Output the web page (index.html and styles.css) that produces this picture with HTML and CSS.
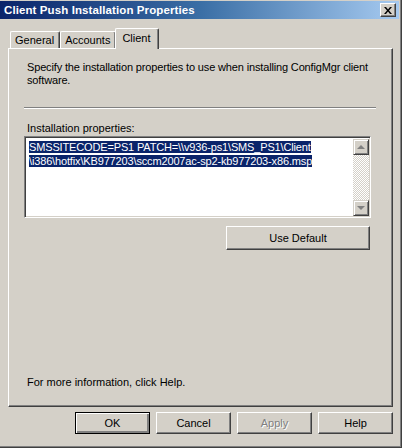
FILE: index.html
```html
<!DOCTYPE html>
<html>
	<head>
		<meta charset="utf-8">
		<title>Client Push Installation Properties</title>
		<link rel="stylesheet" href="styles.css">
	</head>
	<body>
		<div class="window">
			<div class="titlebar">
				<span class="title">Client Push Installation Properties</span>
				<span class="close-btn">
					<svg width="8" height="7" viewBox="0 0 8 7">
						<path d="M0 0h2l2 2.5 2-2.5h2L5 3.5 8 7H6L4 4.5 2 7H0l3-3.5z" fill="#000"/>
					</svg>
				</span>
			</div>
			<div class="tabs">
				<div class="tab">General</div>
				<div class="tab">Accounts</div>
				<div class="tab active">Client</div>
			</div>
			<div class="panel">
				<p class="intro">Specify the installation properties to use when installing ConfigMgr client software.</p>
				<div class="separator"></div>
				<label class="field-label">Installation properties:</label>
				<div class="textbox">
					<div class="textbox-content">
						<span class="selected">SMSSITECODE=PS1 PATCH=\\v936-ps1\SMS_PS1\Client</span><br>
						<span class="selected">\i386\hotfix\KB977203\sccm2007ac-sp2-kb977203-x86.msp</span>
					</div>
					<div class="scrollbar">
						<div class="scroll-btn"><span class="arrow up"></span></div>
						<div class="scroll-track"></div>
						<div class="scroll-btn"><span class="arrow down"></span></div>
					</div>
				</div>
				<div class="default-row">
					<button class="btn wide">Use Default</button>
				</div>
				<p class="help-note">For more information, click Help.</p>
			</div>
			<div class="buttons">
				<button class="btn default">OK</button>
				<button class="btn">Cancel</button>
				<button class="btn disabled">Apply</button>
				<button class="btn">Help</button>
			</div>
		</div>
	</body>
</html>
```

FILE: styles.css
```css
* {
	margin: 0;
	padding: 0;
	box-sizing: border-box;
}
body {
	font-family: "Liberation Sans", Arial, sans-serif;
	font-size: 11px;
	background: #d4d0c8;
	color: #000;
}
.window {
	width: 402px;
	height: 448px;
	display: flex;
	flex-direction: column;
	background: #d4d0c8;
	border-right: 1px solid #404040;
	border-bottom: 1px solid #404040;
	padding-bottom: 1px;
	box-shadow: inset -1px -1px 0 #808080;
}
.titlebar {
	height: 18px;
	margin-top: 1px;
	margin-right: 2px;
	display: flex;
	align-items: center;
	justify-content: space-between;
	padding: 0 3px 0 4px;
	background: linear-gradient(to right, #0a246a, #3a6ea5 50%, #a6caf0);
	color: #fff;
}
.title {
	font-weight: bold;
	font-size: 11.5px;
	letter-spacing: 0.1px;
}
.close-btn {
	width: 16px;
	height: 14px;
	display: flex;
	align-items: center;
	justify-content: center;
	background: #d4d0c8;
	border: 1px solid;
	border-color: #fff #404040 #404040 #fff;
	box-shadow: inset -1px -1px 0 #808080;
}
.tabs {
	display: flex;
	align-items: flex-end;
	height: 29px;
	padding-left: 10px;
	position: relative;
	z-index: 1;
}
.tab {
	height: 17px;
	padding: 0 5px 0 4px;
	display: flex;
	align-items: center;
	border: 1px solid;
	border-bottom: none;
	border-color: #fff #404040 #fff #fff;
	border-radius: 2px 2px 0 0;
	box-shadow: inset -1px 0 0 #808080;
}
.tab.active {
	height: 21px;
	margin: 0 -2px -1px -1px;
	padding: 0 7px 3px 6px;
	background: #d4d0c8;
}
.panel {
	height: 359px;
	margin: 0 8px;
	display: flex;
	flex-direction: column;
	padding: 12px 21px 17px 15px;
	border: 1px solid;
	border-color: #fff #404040 #404040 #fff;
	box-shadow: inset -1px -1px 0 #808080;
}
.intro {
	line-height: 13px;
	padding-left: 3px;
	margin-right: -10px;
	letter-spacing: -0.15px;
}
.separator {
	height: 2px;
	margin: 20px -5px 0 0;
	border-top: 1px solid #808080;
	border-bottom: 1px solid #fff;
}
.field-label {
	display: block;
	margin-top: 13px;
	line-height: 13px;
	padding-left: 3px;
}
.textbox {
	margin-top: 1px;
	height: 82px;
	display: flex;
	background: #fff;
	border: 1px solid;
	border-color: #808080 #fff #fff #808080;
	box-shadow: inset 1px 1px 0 #404040, inset -1px -1px 0 #d4d0c8;
	padding: 2px 1px 1px 2px;
}
.textbox-content {
	flex: 1;
	padding: 1px 0 0 2px;
	line-height: 14px;
	letter-spacing: -0.15px;
}
.selected {
	background: #0a246a;
	color: #fff;
}
.scrollbar {
	width: 16px;
	display: flex;
	flex-direction: column;
}
.scroll-btn {
	height: 16px;
	display: flex;
	align-items: center;
	justify-content: center;
	background: #d4d0c8;
	border: 1px solid;
	border-color: #d4d0c8 #404040 #404040 #d4d0c8;
	box-shadow: inset 1px 1px 0 #fff, inset -1px -1px 0 #808080;
}
.scroll-track {
	flex: 1;
	background-color: #fff;
	background-image: repeating-conic-gradient(#d4d0c8 0 25%, #fff 0 50%);
	background-size: 2px 2px;
}
.arrow {
	width: 0;
	height: 0;
	border-left: 4px solid transparent;
	border-right: 4px solid transparent;
}
.arrow.up {
	border-bottom: 4px solid #808080;
}
.arrow.down {
	border-top: 4px solid #808080;
}
.default-row {
	display: flex;
	justify-content: flex-end;
	margin-top: 8px;
}
.help-note {
	margin-top: auto;
	padding-left: 3px;
	line-height: 13px;
}
.btn {
	font-family: "Liberation Sans", Arial, sans-serif;
	font-size: 11px;
	color: #000;
	width: 75px;
	height: 22px;
	background: #d4d0c8;
	border: 1px solid;
	border-color: #fff #404040 #404040 #fff;
	box-shadow: inset -1px -1px 0 #808080;
}
.btn.wide {
	width: 144px;
	height: 24px;
	margin-right: 1px;
}
.btn.default {
	border: 1px solid #000;
	box-shadow: inset 1px 1px 0 #fff, inset -2px -2px 0 #808080;
}
.btn.disabled {
	color: #808080;
	text-shadow: 1px 1px 0 #fff;
}
.buttons {
	display: flex;
	justify-content: flex-end;
	gap: 6px;
	padding: 5px 8px 0 0;
}
```
